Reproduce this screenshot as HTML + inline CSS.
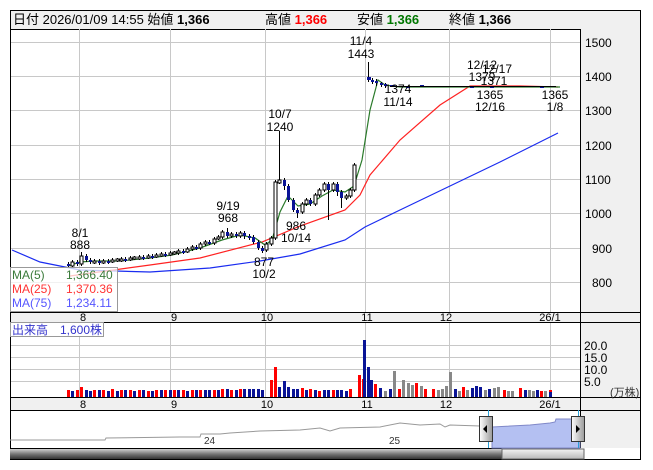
<!DOCTYPE html>
<html><head><meta charset="utf-8"><style>
html,body{margin:0;padding:0;background:#fff;width:653px;height:470px;overflow:hidden}
svg{display:block;font-family:"Liberation Sans","Noto Sans CJK JP",sans-serif}
</style></head><body>
<svg width="653" height="470" xmlns="http://www.w3.org/2000/svg">
<defs>
<linearGradient id="sb" x1="0" y1="0" x2="0" y2="1"><stop offset="0" stop-color="#d0d0d0"/><stop offset="0.5" stop-color="#777"/><stop offset="1" stop-color="#333"/></linearGradient>
<linearGradient id="th" x1="0" y1="0" x2="0" y2="1"><stop offset="0" stop-color="#f4f4f4"/><stop offset="1" stop-color="#b8b8b8"/></linearGradient>
<linearGradient id="hd" x1="0" y1="0" x2="1" y2="0"><stop offset="0" stop-color="#fff"/><stop offset="1" stop-color="#999"/></linearGradient>
</defs>
<rect x="10" y="10" width="631" height="450" fill="#fff"/>
<rect x="10.5" y="10.5" width="630" height="19" fill="#f0f0f0" stroke="#000"/>
<rect x="580" y="29" width="61" height="419" fill="#f0f0f0"/>
<rect x="10" y="312" width="631" height="10" fill="#f0f0f0"/>
<rect x="10" y="397" width="631" height="13" fill="#f0f0f0"/>
<path stroke="#c8c8c8" fill="none" d="M79.5 29V312M170.5 29V312M265.5 29V312M365.5 29V312M449.5 29V312M550.5 29V312M79.5 322V397M170.5 322V397M265.5 322V397M365.5 322V397M449.5 322V397M550.5 322V397M10 42.5H580M10 76.5H580M10 110.5H580M10 145.5H580M10 179.5H580M10 213.5H580M10 248.5H580M10 282.5H580M10 345.5H580M10 357.5H580M10 369.5H580M10 381.5H580"/>
<polyline points="12,250 40,262 80,270 150,272 210,268 260,261 300,254 345,240 365,227 400,210 450,186 500,162 558,133" fill="none" stroke="#1a2cf0" stroke-width="1.2"/>
<polyline points="70,276 150,265 200,258 262,242 300,226 345,210 360,195 370,175 400,140 440,105 470,86 520,86 558,87" fill="none" stroke="#f22" stroke-width="1.2"/>
<polyline points="68,266 80,262 95,261 120,261 150,258 172,255 200,248 222,240 240,235 255,238 265,245 272,240 280,212 288,196 298,206 310,204 322,196 333,190 345,192 354,186 362,160 370,110 378,80 385,85 400,87 560,87" fill="none" stroke="#2a7a2a" stroke-width="1.2"/>
<path stroke="#000" fill="none" d="M68.5 262V268M72.5 260V268M77.5 260V266M81.5 252V266M86.5 254V262M90.5 258V264M94.5 259V264M99.5 259V265M103.5 259V264M108.5 259V264M112.5 258V263M117.5 258V262M121.5 257V262M125.5 257V262M130.5 256V261M134.5 256V260M139.5 255V260M143.5 255V260M148.5 254V259M152.5 254V259M156.5 253V258M161.5 252V257M165.5 252V257M170.5 251V256M174.5 251V255M178.5 249V255M183.5 249V254M187.5 247V253M192.5 245V251M196.5 245V250M200.5 242V250M205.5 240V246M209.5 240V245M214.5 237V245M218.5 235V240M222.5 230V239M227.5 228V238M231.5 232V238M236.5 232V238M240.5 231V238M244.5 231V239M249.5 234V240M253.5 235V244M258.5 240V250M262.5 246V253M266.5 242V252M271.5 236V246M275.5 180V240M279.5 131V184M284.5 178V190M288.5 184V202M293.5 198V212M297.5 208V218M302.5 202V214M306.5 198V206M310.5 198V206M315.5 193V206M319.5 188V197M324.5 182V192M328.5 182V220M333.5 182V192M337.5 182V196M341.5 190V208M346.5 194V200M350.5 188V198M354.5 163V192M368.5 62V82M372.5 78V84M376.5 79V86M381.5 82V87M385.5 83V88"/>
<path fill="#fff" stroke="#000" d="M71 262h3v4h-3zM80 256h3v8h-3zM93 261h3v2h-3zM102 261h3v2h-3zM111 260h3v2h-3zM116 259h3v2h-3zM120 259h3v2h-3zM129 258h3v2h-3zM133 257h3v2h-3zM138 257h3v2h-3zM147 256h3v2h-3zM155 255h3v2h-3zM160 254h3v2h-3zM169 253h3v2h-3zM173 252h3v2h-3zM177 251h3v2h-3zM186 249h3v3h-3zM191 247h3v2h-3zM199 244h3v4h-3zM204 242h3v2h-3zM213 239h3v4h-3zM217 237h3v2h-3zM221 232h3v5h-3zM230 234h3v2h-3zM239 233h3v3h-3zM265 244h3v6h-3zM270 238h3v6h-3zM274 182h3v56h-3zM278 180h3v3h-3zM301 204h3v8h-3zM305 200h3v4h-3zM314 195h3v9h-3zM318 190h3v5h-3zM323 184h3v6h-3zM332 184h3v6h-3zM345 196h3v2h-3zM349 190h3v6h-3zM353 165h3v25h-3z"/>
<path fill="#0a1496" d="M67 264h3v2h-3zM76 262h3v2h-3zM85 256h3v4h-3zM89 260h3v2h-3zM98 261h3v2h-3zM107 261h3v2h-3zM124 259h3v2h-3zM142 257h3v2h-3zM151 256h3v2h-3zM164 254h3v2h-3zM182 251h3v2h-3zM195 247h3v2h-3zM208 242h3v2h-3zM226 232h3v4h-3zM235 234h3v2h-3zM243 233h3v3h-3zM248 236h3v2h-3zM252 237h3v5h-3zM257 242h3v6h-3zM261 248h3v3h-3zM283 180h3v6h-3zM287 186h3v14h-3zM292 200h3v10h-3zM296 210h3v3h-3zM309 200h3v4h-3zM327 184h3v6h-3zM336 184h3v8h-3zM340 192h3v6h-3zM367 77h4v3h-4zM371 80h3v2h-3zM375 81h3v2h-3zM380 83h3v2h-3zM384 84h3v2h-3z"/>
<path fill="#0a1496" d="M390 85h5v2h-5zM406 86h4v2h-4zM420 85h4v2h-4zM470 86h4v2h-4zM490 86h4v2h-4zM540 86h4v2h-4z"/>
<path stroke="#000" stroke-width="1" d="M390 86.5h166"/>
<path fill="#f00" d="M67 397v-7h3v7zM76 397v-7h3v7zM80 397v-10h3v10zM93 397v-7h3v7zM102 397v-7h3v7zM111 397v-8h3v8zM120 397v-7h3v7zM129 397v-7h3v7zM138 397v-7h3v7zM147 397v-6h3v6zM155 397v-7h3v7zM164 397v-7h3v7zM173 397v-7h3v7zM182 397v-7h3v7zM191 397v-7h3v7zM199 397v-7h3v7zM213 397v-7h3v7zM221 397v-8h3v8zM230 397v-7h3v7zM239 397v-8h3v8zM270 397v-17h3v17zM274 397v-30h3v30zM301 397v-9h3v9zM309 397v-8h3v8zM318 397v-6h3v6zM332 397v-7h3v7zM349 397v-8h3v8zM358 397v-22h3v22zM362 397v-18h3v18zM374 397v-13h3v13zM398 397v-8h3v8zM415 397v-14h3v14zM424 397v-8h3v8zM432 397v-8h3v8zM462 397v-10h3v10zM503 397v-7h3v7zM519 397v-9h3v9zM540 397v-6h3v6zM549 397v-7h3v7z"/>
<path fill="#0a1496" d="M71 397v-6h3v6zM85 397v-7h3v7zM89 397v-6h3v6zM98 397v-7h3v7zM107 397v-6h3v6zM116 397v-6h3v6zM124 397v-7h3v7zM133 397v-6h3v6zM142 397v-7h3v7zM151 397v-6h3v6zM160 397v-7h3v7zM169 397v-7h3v7zM177 397v-7h3v7zM186 397v-6h3v6zM195 397v-7h3v7zM204 397v-7h3v7zM208 397v-7h3v7zM217 397v-7h3v7zM226 397v-8h3v8zM235 397v-7h3v7zM243 397v-8h3v8zM248 397v-8h3v8zM252 397v-8h3v8zM257 397v-8h3v8zM261 397v-7h3v7zM278 397v-10h3v10zM283 397v-16h3v16zM287 397v-10h3v10zM292 397v-8h3v8zM296 397v-8h3v8zM305 397v-7h3v7zM314 397v-7h3v7zM323 397v-7h3v7zM327 397v-7h3v7zM336 397v-7h3v7zM340 397v-7h3v7zM345 397v-6h3v6zM363 397v-57h3v57zM367 397v-30h3v30zM370 397v-17h3v17zM379 397v-9h3v9zM389 397v-8h3v8zM454 397v-8h3v8zM471 397v-9h3v9zM475 397v-11h3v11zM479 397v-10h3v10zM488 397v-8h3v8zM524 397v-7h3v7zM536 397v-7h3v7zM549 397v-5h3v5z"/>
<path fill="#888" d="M384 397v-6h3v6zM393 397v-26h3v26zM402 397v-17h3v17zM407 397v-14h3v14zM411 397v-12h3v12zM420 397v-11h3v11zM437 397v-7h3v7zM441 397v-8h3v8zM445 397v-11h3v11zM449 397v-25h3v25zM458 397v-6h3v6zM466 397v-7h3v7zM484 397v-7h3v7zM493 397v-9h3v9zM497 397v-10h3v10zM507 397v-6h3v6zM511 397v-6h3v6zM528 397v-7h3v7zM532 397v-6h3v6zM544 397v-6h3v6z"/>
<g stroke="#000" fill="none" stroke-width="1">
<line x1="580.5" y1="29" x2="580.5" y2="448"/>
<line x1="10" y1="312.5" x2="641" y2="312.5"/>
<line x1="10" y1="322.5" x2="641" y2="322.5"/>
<line x1="10" y1="397.5" x2="641" y2="397.5"/>
<line x1="10" y1="410.5" x2="641" y2="410.5"/>
<line x1="10" y1="448.5" x2="580" y2="448.5"/>
<rect x="10.5" y="10.5" width="630" height="449"/>
</g>
<g font-size="13" fill="#000">
<text x="13" y="24">日付 2026/01/09 14:55 始値 <tspan font-weight="bold">1,366</tspan></text>
<text x="265" y="24">高値 <tspan font-weight="bold" fill="#f00">1,366</tspan></text>
<text x="357" y="24">安値 <tspan font-weight="bold" fill="#070">1,366</tspan></text>
<text x="449" y="24">終値 <tspan font-weight="bold">1,366</tspan></text>
</g>
<g font-size="12" fill="#000">
<text x="585" y="47">1500</text><text x="585" y="81">1400</text><text x="585" y="115">1300</text><text x="585" y="150">1200</text><text x="585" y="184">1100</text><text x="585" y="218">1000</text><text x="592" y="253">900</text><text x="592" y="287">800</text>
<text x="584" y="350">20.0</text><text x="584" y="362">15.0</text><text x="584" y="374">10.0</text><text x="584" y="386">5.0</text><text x="610" y="396" font-size="11" fill="#333">(万株)</text>
</g>
<g font-size="11" fill="#000" text-anchor="middle">
<text x="83" y="321">8</text><text x="174" y="321">9</text><text x="267" y="321">10</text><text x="367" y="321">11</text><text x="446" y="321">12</text><text x="550" y="321">26/1</text>
<text x="83" y="408">8</text><text x="174" y="408">9</text><text x="267" y="408">10</text><text x="367" y="408">11</text><text x="446" y="408">12</text><text x="550" y="408">26/1</text>
</g>
<g font-size="12" fill="#000" text-anchor="middle">
<text x="361" y="45">11/4</text><text x="361" y="58">1443</text>
<text x="398" y="93">1374</text><text x="398" y="106">11/14</text>
<text x="482" y="69">12/12</text><text x="482" y="81">1379</text><text x="497" y="73">12/17</text><text x="494" y="85">1371</text>
<text x="490" y="99">1365</text><text x="490" y="111">12/16</text>
<text x="555" y="99">1365</text><text x="555" y="111">1/8</text>
<text x="280" y="118">10/7</text><text x="280" y="131">1240</text>
<text x="228" y="210">9/19</text><text x="228" y="222">968</text>
<text x="80" y="237">8/1</text><text x="80" y="249">888</text>
<text x="296" y="230">986</text><text x="296" y="242">10/14</text>
<text x="264" y="266">877</text><text x="264" y="278">10/2</text>
</g>
<rect x="10.5" y="267.5" width="107" height="44" fill="#fff" fill-opacity="0.75" stroke="#999"/>
<g font-size="12">
<text x="12" y="279" fill="#3a7a3a">MA(5)</text><text x="66" y="279" fill="#3a7a3a">1,366.40</text>
<text x="12" y="293" fill="#f33">MA(25)</text><text x="66" y="293" fill="#f33">1,370.36</text>
<text x="12" y="307" fill="#55f">MA(75)</text><text x="66" y="307" fill="#55f">1,234.11</text>
</g>
<rect x="10.5" y="322.5" width="93" height="14" fill="#fff" stroke="#999"/>
<text x="12" y="334" font-size="12" fill="#33c">出来高　1,600株</text>
<polyline fill="none" stroke="#999" points="10,440 105,440 106,438 180,437 200,437 201,434 220,434 230,433 260,431 300,430 320,428 330,431 340,428 380,427 400,423 420,425 440,424 445,427 450,425 480,426 488,424"/>
<text x="204" y="444" font-size="10" fill="#333">24</text>
<text x="389" y="444" font-size="10" fill="#333">25</text>
<polygon fill="#b4c0f2" stroke="#8088c8" points="492,427 530,425 540,424 550,423 555,422 556,419 580,419 580,448 492,448"/>
<line x1="488.5" y1="410" x2="488.5" y2="448" stroke="#29a0d8"/>
<line x1="578.5" y1="410" x2="578.5" y2="448" stroke="#29a0d8"/>
<rect x="10" y="449" width="570" height="10" fill="url(#sb)"/>
<rect x="502" y="449" width="82" height="10" fill="url(#th)" stroke="#666"/>
<rect x="479.5" y="416.5" width="13" height="25" fill="url(#hd)" stroke="#333"/>
<polygon points="483,429 487,425 487,433" fill="#000"/>
<rect x="571.5" y="416.5" width="13" height="25" fill="url(#hd)" stroke="#333"/>
<polygon points="580,429 576,425 576,433" fill="#000"/>
</svg>
</body></html>
